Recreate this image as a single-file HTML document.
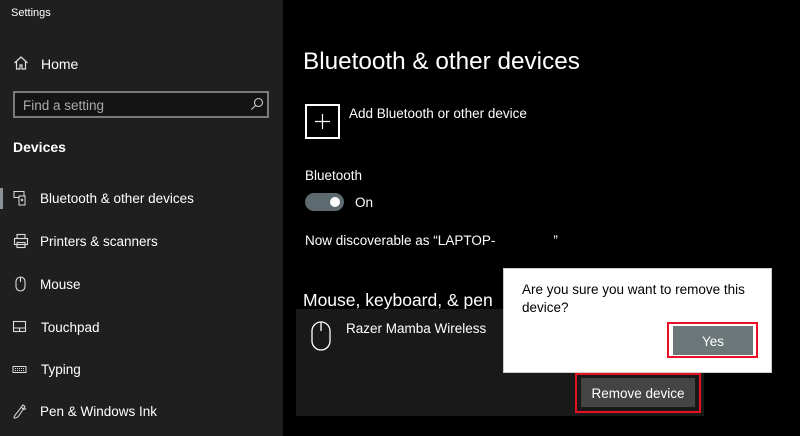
<!DOCTYPE html>
<html><head><style>
*{margin:0;padding:0;box-sizing:border-box}
body{width:800px;height:436px;background:#000;font-family:"Liberation Sans",sans-serif;color:#fff;position:relative;overflow:hidden}
.abs{position:absolute;white-space:nowrap}
#side{position:absolute;left:0;top:0;width:283px;height:436px;background:#1f1f1f}
.nav{font-size:13.5px;line-height:16px}
svg{position:absolute}
</style></head><body>
<div id="side">
<div class="abs" style="left:11px;top:7px;font-size:11px">Settings</div>
<svg style="left:13px;top:55px" width="16" height="16" viewBox="0 0 16 16" fill="none" stroke="#ddd" stroke-width="1.2"><path d="M1.5 8 8 2l6.5 6M3.5 6.5V14h3.5v-4h2v4h3.5V6.5"/></svg>
<div class="abs nav" style="left:41px;top:56px;font-size:14px">Home</div>
<div class="abs" style="left:13px;top:91px;width:256px;height:27px;border:2px solid #7a7a7a;background:#141414"></div>
<div class="abs" style="left:23px;top:98px;font-size:13.5px;color:#aaa">Find a setting</div>
<svg style="left:250px;top:97px" width="14" height="14" viewBox="0 0 14 14" fill="none" stroke="#ccc" stroke-width="1.1"><circle cx="8.5" cy="5.5" r="4"/><path d="M5.5 8.5 1.5 12.5"/></svg>
<div class="abs" style="left:13px;top:139px;font-size:14px;font-weight:bold">Devices</div>
<div class="abs" style="left:0;top:188px;width:3px;height:21px;background:#8a9298"></div>
<svg style="left:13px;top:190px" width="16" height="16" viewBox="0 0 16 16" fill="none" stroke="#ddd" stroke-width="1"><rect x="1" y="1.5" width="10" height="6"/><rect x="6" y="6" width="6" height="9" fill="#1f1f1f"/><path d="M8 9l2 2M10 9l-2 2"/></svg>
<div class="abs nav" style="left:40px;top:191px">Bluetooth &amp; other devices</div>
<svg style="left:13px;top:233px" width="16" height="16" viewBox="0 0 16 16" fill="none" stroke="#ddd" stroke-width="1.1"><rect x="4" y="1.5" width="8" height="4"/><rect x="1.5" y="5.5" width="13" height="6"/><rect x="4" y="9.5" width="8" height="5"/></svg>
<div class="abs nav" style="left:40px;top:234px">Printers &amp; scanners</div>
<svg style="left:13px;top:276px" width="16" height="16" viewBox="0 0 16 16" fill="none" stroke="#ddd" stroke-width="1.1"><rect x="3" y="1" width="9" height="14" rx="4.5"/><path d="M7.5 1v5"/></svg>
<div class="abs nav" style="left:40px;top:277px">Mouse</div>
<svg style="left:12px;top:319px" width="16" height="16" viewBox="0 0 16 16" fill="none" stroke="#ddd" stroke-width="1.1"><rect x="1.5" y="2.5" width="12" height="10"/><path d="M1.5 9h12M7.5 9v3.5"/></svg>
<div class="abs nav" style="left:41px;top:320px">Touchpad</div>
<svg style="left:12px;top:362px" width="16" height="16" viewBox="0 0 16 16" fill="none" stroke="#ddd" stroke-width="1"><rect x="1" y="4.5" width="13" height="6"/><path d="M3 6.5h9M3 8.5h9" stroke-dasharray="1 1"/></svg>
<div class="abs nav" style="left:41px;top:362px">Typing</div>
<svg style="left:12px;top:403px" width="16" height="16" viewBox="0 0 16 16" fill="none" stroke="#ddd" stroke-width="1"><path d="M2 15c0-2 1-3 2-4l7-9 2 1.5-6 9c-1 1.5-2 2.5-4 2.5zM9 4l3 2.5 2-1"/></svg>
<div class="abs nav" style="left:40px;top:404px">Pen &amp; Windows Ink</div>
</div>

<div class="abs" style="left:303px;top:48px;font-size:24.3px">Bluetooth &amp; other devices</div>
<div class="abs" style="left:305px;top:104px;width:35px;height:35px;border:2px solid #fff"></div>
<svg style="left:313px;top:112px" width="19" height="19" viewBox="0 0 19 19" stroke="#fff" stroke-width="1.2"><path d="M9.5 2v15M2 9.5h15"/></svg>
<div class="abs" style="left:349px;top:106px;font-size:13.5px">Add Bluetooth or other device</div>
<div class="abs" style="left:305px;top:168px;font-size:13.5px">Bluetooth</div>
<div class="abs" style="left:305px;top:193px;width:39px;height:18px;border-radius:9px;background:#5d6b70"></div>
<div class="abs" style="left:330px;top:197px;width:10px;height:10px;border-radius:5px;background:#fff"></div>
<div class="abs" style="left:355px;top:195px;font-size:13.5px">On</div>
<div class="abs" style="left:305px;top:233px;font-size:13.5px">Now discoverable as “LAPTOP-<span style="padding-left:58px">”</span></div>
<div class="abs" style="left:303px;top:290px;font-size:17.5px">Mouse, keyboard, &amp; pen</div>
<div class="abs" style="left:296px;top:309px;width:408px;height:107px;background:#191919"></div>
<svg style="left:310px;top:320px" width="22" height="32" viewBox="0 0 22 32" fill="none" stroke="#fff" stroke-width="1.3"><rect x="2" y="2" width="18" height="28" rx="9"/><path d="M11 2v9"/></svg>
<div class="abs" style="left:346px;top:321px;font-size:13.5px">Razer Mamba Wireless</div>
<div class="abs" style="left:575px;top:373px;width:126px;height:40px;border:2px solid #e81123"></div>
<div class="abs" style="left:581px;top:378px;width:114px;height:29px;background:#444;font-size:13.5px;text-align:center;line-height:31px">Remove device</div>
<div class="abs" style="left:503px;top:268px;width:269px;height:105px;background:#fff;border:1px solid #ccc"></div>
<div class="abs" style="left:522px;top:281px;font-size:13.5px;color:#000;line-height:18px;white-space:normal;width:240px">Are you sure you want to remove this device?</div>
<div class="abs" style="left:667px;top:322px;width:91px;height:36px;border:2px solid #e81123"></div>
<div class="abs" style="left:673px;top:326px;width:80px;height:29px;background:#6a7677;font-size:13.5px;text-align:center;line-height:31px">Yes</div>
</body></html>
